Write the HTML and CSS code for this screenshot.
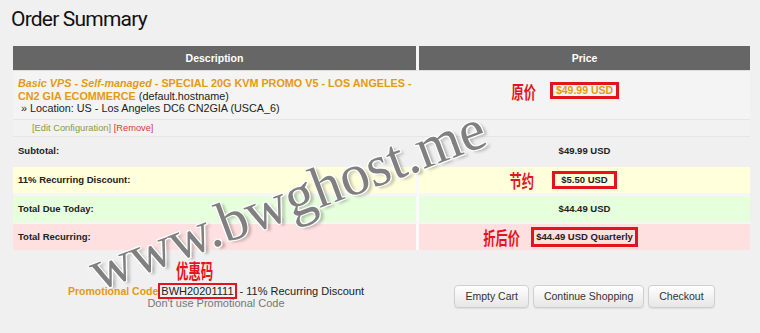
FILE: index.html
```html
<!DOCTYPE html>
<html lang="en">
<head>
  <meta charset="UTF-8">
  <title>Order Summary</title>
  <link rel="stylesheet" href="styles.css">
</head>
<body>
  <div id="page">
    <h1 class="title">Order Summary</h1>

    <table class="cart">
      <thead>
        <tr>
          <th class="col-desc">Description</th>
          <th class="col-price">Price</th>
        </tr>
      </thead>
      <tbody>
        <tr class="item">
          <td class="desc">
            <strong class="product"><em>Basic VPS - Self-managed</em> - SPECIAL 20G KVM PROMO V5 - LOS ANGELES - CN2 GIA ECOMMERCE</strong> (default.hostname)<br>
            &nbsp;&raquo; Location: US - Los Angeles DC6 CN2GIA (USCA_6)
          </td>
          <td class="price">
            <span class="mark mark-item"><span class="note note-orig">原价</span>$49.99 USD</span>
          </td>
        </tr>
        <tr class="item-actions">
          <td colspan="2">
            <a href="#" class="edit">[Edit Configuration]</a> <a href="#" class="remove">[Remove]</a>
          </td>
        </tr>
        <tr class="subtotal">
          <td class="label">Subtotal:</td>
          <td class="price">$49.99 USD</td>
        </tr>
        <tr class="discount">
          <td class="label">11% Recurring Discount:</td>
          <td class="price"><span class="mark mark-save"><span class="note note-save">节约</span>$5.50 USD</span></td>
        </tr>
        <tr class="due">
          <td class="label">Total Due Today:</td>
          <td class="price">$44.49 USD</td>
        </tr>
        <tr class="recurring">
          <td class="label">Total Recurring:</td>
          <td class="price"><span class="mark mark-final"><span class="note note-final">折后价</span>$44.49 USD Quarterly</span></td>
        </tr>
      </tbody>
    </table>

    <div class="checkout-bar">
      <div class="promo">
        <div>
          <span class="promo-label">Promotional Code</span><span class="code"><span class="note note-code">优惠码</span>BWH20201111</span> - 11% Recurring Discount
        </div>
        <a href="#" class="promo-remove">Don't use Promotional Code</a>
      </div>
      <div class="actions">
        <button class="btn">Empty Cart</button>
        <button class="btn">Continue Shopping</button>
        <button class="btn">Checkout</button>
      </div>
    </div>

    <div class="watermark">www.bwghost.me</div>
  </div>
</body>
</html>
```

FILE: styles.css
```css
* {
  margin: 0;
  padding: 0;
  box-sizing: border-box;
}

html, body {
  height: 100%;
  background-color: #f0f0f0;
  font-family: "Liberation Sans", Arial, sans-serif;
  color: #222;
}

#page {
  position: relative;
  height: 333px;
  overflow: hidden;
}

.title {
  padding: 4px 0 0 11px;
  height: 46px;
  font-family: Roboto, sans-serif;
  font-size: 21px;
  font-weight: 400;
  line-height: 30px;
  letter-spacing: -0.8px;
  color: #111;
}

/* cart table */

.cart {
  margin-left: 13px;
  width: 737px;
  border-collapse: separate;
  border-spacing: 0;
  table-layout: fixed;
}

.cart th {
  height: 25px;
  background-color: #666;
  color: #fff;
  font-size: 10.5px;
  font-weight: bold;
  text-align: center;
  border-bottom: 1px solid #ddd;
}

.cart .col-desc {
  width: 406px;
  border-right: 3px solid #f7f7f7;
}

.cart td.price {
  text-align: center;
  font-size: 9.5px;
  font-weight: bold;
}

.cart tr.item td {
  background-color: #f4f4f4;
  vertical-align: top;
}

.desc {
  padding: 6px 4px 4px 5px;
  font-size: 10.8px;
  line-height: 12.5px;
}

.product {
  color: #e59a10;
}

.item .price {
  padding-top: 11px;
}

.item-actions td {
  height: 18px;
  padding-left: 19px;
  font-size: 9.3px;
  border-top: 1px solid #e6e6e6;
  border-bottom: 1px solid #e6e6e6;
  background-color: #f2f2f2;
}

.item-actions a {
  text-decoration: none;
}

.edit {
  color: #8c9a3c;
}

.remove {
  color: #d63a3a;
}

.cart td.label {
  padding-left: 5px;
  font-size: 9.5px;
  font-weight: bold;
  border-right: 3px solid #fafafa;
}

.subtotal td {
  height: 30px;
  border-bottom: 2px solid #f0f0f0;
}

.cart .subtotal td.label {
  border-right-color: #f0f0f0;
}

.discount td,
.due td,
.recurring td {
  height: 28px;
  border-bottom: 2px solid #f6f6f6;
}

.discount td {
  background-color: #ffffdc;
  height: 29px;
  border-bottom-width: 3px;
}

.due td {
  background-color: #e6ffdc;
}

.recurring td {
  background-color: #ffe0e0;
  border-bottom: 0;
  height: 26px;
}

/* red annotations */

.mark {
  position: relative;
  display: inline-block;
  border: 3px solid #e5141c;
}

.mark-item {
  padding: 0 3px;
  font-size: 10.5px;
  line-height: 11px;
  color: #e59a10;
}

.mark-save {
  padding: 0 6px;
  line-height: 12px;
}

.mark-final {
  padding: 1px 2px;
  line-height: 12px;
}

.note {
  position: absolute;
  top: 50%;
  right: 100%;
  transform: translateY(-50%) scaleX(0.68);
  transform-origin: right center;
  font-family: "Noto Sans CJK SC", sans-serif;
  font-size: 18px;
  font-weight: 700;
  line-height: 18px;
  color: #e5141c;
  white-space: nowrap;
}

.note-orig {
  margin-right: 17px;
}

.note-save {
  margin-right: 21px;
}

.note-final {
  margin-right: 14px;
}

/* promo + buttons */

.checkout-bar {
  display: grid;
  grid-template-columns: 406px 331px;
  margin-left: 13px;
  padding-top: 35px;
}

.promo {
  text-align: center;
  font-size: 11px;
  line-height: 12px;
}

.promo-label {
  color: #e59a10;
  font-weight: bold;
  font-size: 10.5px;
}

.code {
  position: relative;
  border: 2px solid #e5141c;
  padding: 0 1px;
}

.note-code {
  top: auto;
  bottom: 100%;
  left: 16px;
  right: auto;
  margin-bottom: 4px;
  transform: scaleX(0.62);
  transform-origin: left bottom;
  font-size: 20px;
  line-height: 20px;
}

.promo-remove {
  color: #777;
  text-decoration: none;
}

.actions {
  display: flex;
  justify-content: center;
  gap: 4px;
}

.btn {
  height: 23px;
  padding: 0 10px;
  font-family: "Liberation Sans", Arial, sans-serif;
  font-size: 10.5px;
  color: #333;
  background: linear-gradient(#ffffff, #e6e6e6);
  border: 1px solid #cfcfcf;
  border-radius: 4px;
  box-shadow: 0 1px 1px rgba(0, 0, 0, 0.08);
}

/* watermark stamped over the screenshot */

.watermark {
  position: absolute;
  left: 78px;
  top: 168px;
  transform: rotate(-20.5deg);
  font-family: "Liberation Serif", serif;
  font-size: 58px;
  line-height: 64px;
  color: #808080;
  text-shadow: 1px 1px 0 #fff, -1px -1px 0 #fff, 1px -1px 0 #fff, -1px 1px 0 #fff, 3px 3px 3px rgba(0, 0, 0, 0.25);
  pointer-events: none;
  white-space: nowrap;
}
```
